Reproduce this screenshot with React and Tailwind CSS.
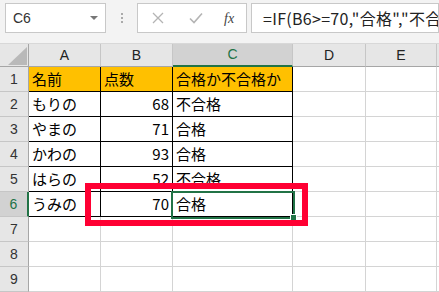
import React from "react";

const cols = [
  { key: "A", w: "w-[72px]" },
  { key: "B", w: "w-[72px]" },
  { key: "C", w: "w-[120px]" },
  { key: "D", w: "w-[73px]" },
  { key: "E", w: "w-[71px]" },
];

const rows = [
  ["名前", "点数", "合格か不合格か"],
  ["もりの", 68, "不合格"],
  ["やまの", 71, "合格"],
  ["かわの", 93, "合格"],
  ["はらの", 52, "不合格"],
  ["うみの", 70, "合格"],
  [],
  [],
  [],
];

const font = { fontFamily: '"Noto Sans CJK JP", "Noto Sans", sans-serif' };

function FormulaBar() {
  return (
    <div className="flex h-[43px] items-start bg-[#f3f3f3] pl-[5px] pt-[3px]">
      <div className="flex h-[30px] w-[101px] items-center justify-between border border-[#c8c8c8] bg-white pl-[7px] pr-[7px]">
        <span className="text-[14px] text-[#333]" style={{ fontFamily: '"Liberation Sans", Arial, sans-serif' }}>
          C6
        </span>
        <span className="h-0 w-0 border-x-[4px] border-t-[4px] border-x-transparent border-t-[#777]" />
      </div>
      <div className="flex h-[30px] w-[31px] flex-col items-center justify-center gap-[2px]">
        <span className="h-[2px] w-[2px] bg-[#aaa]" />
        <span className="h-[2px] w-[2px] bg-[#aaa]" />
        <span className="h-[2px] w-[2px] bg-[#aaa]" />
      </div>
      <div className="flex h-[30px] w-[110px] items-center border border-[#c8c8c8] bg-white">
        <svg width="12" height="12" viewBox="0 0 12 12" className="ml-[14px]">
          <path d="M1 1 L11 11 M11 1 L1 11" stroke="#b4b4b4" strokeWidth="1.3" fill="none" />
        </svg>
        <svg width="14" height="12" viewBox="0 0 14 12" className="ml-[25px]">
          <path d="M1 6.5 L5 10.5 L13 1.5" stroke="#b4b4b4" strokeWidth="1.6" fill="none" />
        </svg>
        <span
          className="ml-[21px] text-[14px] italic text-[#444]"
          style={{ fontFamily: '"Liberation Serif", "Times New Roman", serif' }}
        >
          fx
        </span>
      </div>
      <div className="ml-[4px] flex h-[30px] flex-1 items-center overflow-hidden whitespace-nowrap border border-[#c8c8c8] bg-white pl-[11px]">
        <span className="text-[16px] tracking-[0.3px] text-[#222]" style={font}>
          =IF(B6&gt;=70,"合格","不合格")
        </span>
      </div>
    </div>
  );
}

function HeaderRow() {
  return (
    <div className="flex h-[24px] border-t border-[#d8d8d8]">
      <div className="relative h-full w-[29px] border-b border-r border-[#a6a6a6] bg-[#e6e6e6]">
        <svg width="19" height="18" viewBox="0 0 19 18" className="absolute left-[8px] top-[3px]">
          <path d="M19 0 L19 18 L0 18 Z" fill="#b9b9b9" />
        </svg>
      </div>
      {cols.map((c) => (
        <div
          key={c.key}
          className={
            c.key === "C"
              ? `${c.w} flex h-full items-center justify-center border-b-2 border-r border-b-[#217346] border-r-[#c6c6c6] bg-[#d2d2d2] text-[#217346]`
              : `${c.w} flex h-full items-center justify-center border-b border-r border-b-[#a6a6a6] border-r-[#c6c6c6] bg-[#e6e6e6] text-[#222]`
          }
        >
          <span className="text-[14px]" style={{ fontFamily: '"Liberation Sans", Arial, sans-serif' }}>
            {c.key}
          </span>
        </div>
      ))}
      <div className="h-full flex-1 border-b border-[#a6a6a6] bg-[#e6e6e6]" />
    </div>
  );
}

function BodyRow({ n, data }) {
  const inTable = n <= 6;
  const selected = n === 6;
  return (
    <div className="flex h-[25px]">
      <div
        className={
          selected
            ? "flex h-full w-[29px] items-center justify-center border-b border-r-2 border-b-[#c6c6c6] border-r-[#217346] bg-[#d2d2d2] text-[#217346]"
            : "flex h-full w-[29px] items-center justify-center border-b border-r border-b-[#c6c6c6] border-r-[#a6a6a6] bg-[#e6e6e6] text-[#333]"
        }
      >
        <span className="text-[14px]" style={{ fontFamily: '"Liberation Sans", Arial, sans-serif' }}>
          {n}
        </span>
      </div>
      {cols.map((c, i) => {
        const black = inTable && i < 3;
        const yellow = n === 1 && i < 3;
        const val = data[i];
        const numeric = typeof val === "number";
        return (
          <div
            key={c.key}
            className={
              (black ? "border-black " : "border-[#d4d4d4] ") +
              (yellow ? "bg-[#ffc000] " : "bg-white ") +
              (numeric ? "justify-end pr-[3px] " : "justify-start pl-[3px] ") +
              `${c.w} flex h-full items-center overflow-hidden whitespace-nowrap border-b border-r text-[15px] text-black`
            }
            style={font}
          >
            {val}
          </div>
        );
      })}
      <div className="h-full flex-1 border-b border-[#d4d4d4]" />
    </div>
  );
}

export default function App() {
  return (
    <div className="relative h-[292px] w-[439px] overflow-hidden bg-white">
      <FormulaBar />
      <HeaderRow />
      {rows.map((r, i) => (
        <BodyRow key={i} n={i + 1} data={r} />
      ))}

      {/* active cell C6 */}
      <div className="pointer-events-none absolute left-[171px] top-[191px] h-[28px] w-[124px] border-2 border-[#217346]" />
      <div className="pointer-events-none absolute left-[290px] top-[214px] h-[7px] w-[7px] border border-white bg-[#217346]" />

      {/* red highlight */}
      <div className="pointer-events-none absolute left-[85px] top-[183px] h-[43px] w-[223px] border-[6px] border-[#ff0033]" />
    </div>
  );
}
